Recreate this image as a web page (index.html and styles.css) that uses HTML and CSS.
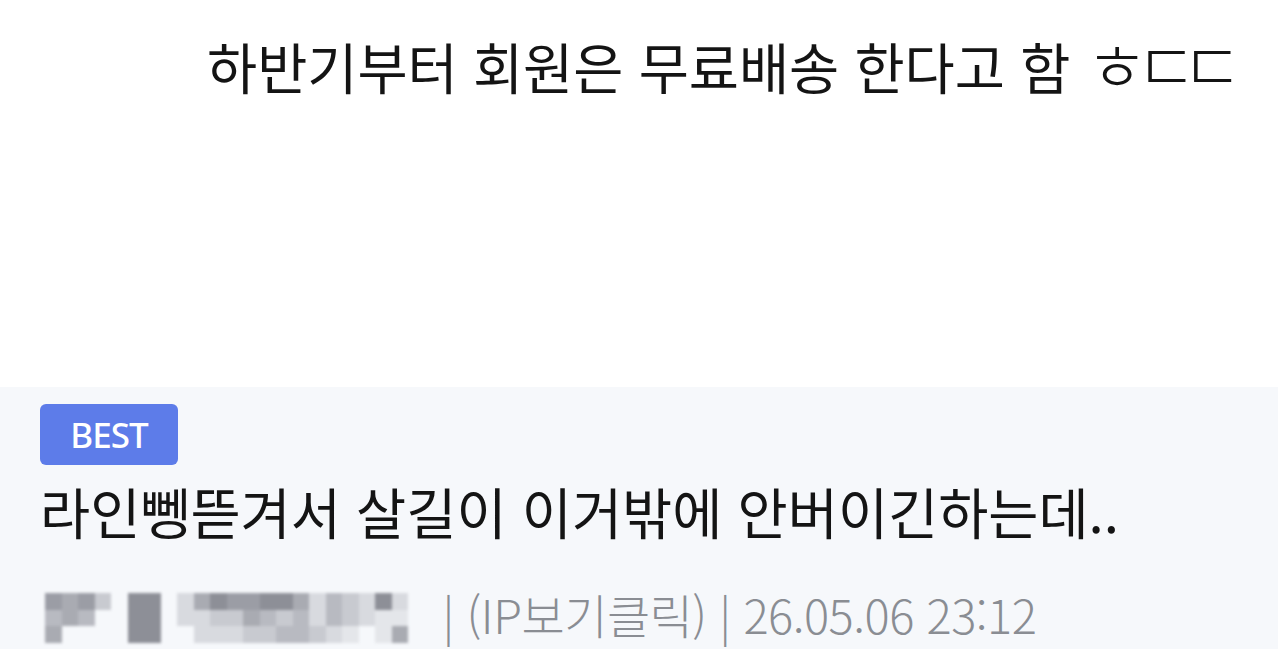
FILE: index.html
```html
<!DOCTYPE html>
<html lang="ko">
<head>
  <meta charset="UTF-8">
  <meta name="viewport" content="width=device-width, initial-scale=1.0">
  <title>게시글</title>
  <link rel="stylesheet" href="styles.css">
</head>
<body>
  <!-- 본문 -->
  <div class="post-body">
    <p class="post-text">하반기부터 회원은 무료배송 한다고 함 <span class="jamo"><span class="jamo-h">ㅎ</span>ㄷㄷ</span></p>
  </div>

  <!-- 다음 글 -->
  <div class="next-post">
    <span class="badge">BEST</span>
    <h2 class="next-title">라인뼁뜯겨서 살길이 이거밖에 안버이긴하는데..</h2>
    <div class="meta">
      <div class="mosaic" aria-hidden="true">
        <i class="c2"></i><i class="c3"></i><i class="c2"></i><i class="c5"></i><i></i><i class="c1"></i><i class="c1"></i><i></i><i class="c6"></i><i class="c3"></i><i class="c1"></i><i class="c2"></i><i class="c2"></i><i class="c1"></i><i class="c1"></i><i class="c3"></i><i class="c6"></i><i class="c4"></i><i class="c5"></i><i class="c6"></i><i class="c1"></i><i class="c6"></i><i></i>
        <i class="c4"></i><i class="c3"></i><i class="c4"></i><i></i><i></i><i class="c1"></i><i class="c1"></i><i></i><i class="c6"></i><i class="c6"></i><i class="c5"></i><i class="c5"></i><i class="c3"></i><i class="c4"></i><i class="c5"></i><i class="c4"></i><i class="c6"></i><i class="c4"></i><i class="c5"></i><i class="c6"></i><i class="c7"></i><i class="c7"></i><i></i>
        <i class="c3"></i><i></i><i></i><i></i><i></i><i class="c1"></i><i class="c1"></i><i></i><i></i><i class="c6"></i><i class="c6"></i><i class="c6"></i><i class="c5"></i><i class="c5"></i><i class="c4"></i><i class="c4"></i><i class="c5"></i><i class="c6"></i><i class="c7"></i><i></i><i class="c7"></i><i class="c3"></i><i></i>
      </div>
      <span class="meta-text">| (IP보기클릭) | 26.05.06 23:12</span>
    </div>
  </div>
</body>
</html>
```

FILE: styles.css
```css
/* 기본 */
* {
  box-sizing: border-box;
  margin: 0;
  padding: 0;
}
body {
  font-family: "Noto Sans CJK KR", "Noto Sans", sans-serif;
  background: #fff;
  color: #111;
}
.post-body {
  height: 387px;
  padding: 28px 0 0 207px;
}
.post-text {
  font-size: 54.5px;
  line-height: 76px;
  color: #141414;
  white-space: nowrap;
}
/* 자모는 크게 */
.jamo {
  display: inline-block;
  font-size: 68px;
  font-weight: 300;
  line-height: 0;
  letter-spacing: -17px;
  vertical-align: -3px;
}
.jamo-h {
  margin-right: 4px;
}
/* 다음 글 영역 */
.next-post {
  background: #f6f8fb;
  height: 262px;
  padding: 17px 40px 0;
}
.badge {
  display: inline-block;
  width: 138px;
  height: 61px;
  line-height: 61px;
  text-align: center;
  background: #5d7ce9;
  color: #fff;
  border-radius: 6px;
  font-family: "Noto Sans", sans-serif;
  font-size: 35px;
  font-weight: 500;
  letter-spacing: -1px;
}
.next-title {
  margin-top: 8px;
  font-size: 54.5px;
  font-weight: 400;
  line-height: 76px;
  color: #141414;
  white-space: nowrap;
}
.meta {
  display: flex;
  align-items: flex-start;
  margin-top: 44px;
  padding-left: 5px;
}
.mosaic {
  display: grid;
  grid-template-columns: repeat(23, 16.5px);
  grid-auto-rows: 16.5px;
  filter: blur(1.5px);
}
.mosaic .c1 { background: #8d8f97; }
.mosaic .c2 { background: #9b9da5; }
.mosaic .c3 { background: #a9abb2; }
.mosaic .c4 { background: #b8bac1; }
.mosaic .c5 { background: #c8cad0; }
.mosaic .c6 { background: #d8dadf; }
.mosaic .c7 { background: #e4e6ea; }
.meta-text {
  margin: -7px 0 0 18px;
  font-size: 47px;
  font-weight: 300;
  line-height: 56px;
  color: #8a8d93;
  white-space: nowrap;
  letter-spacing: -0.5px;
}
```
